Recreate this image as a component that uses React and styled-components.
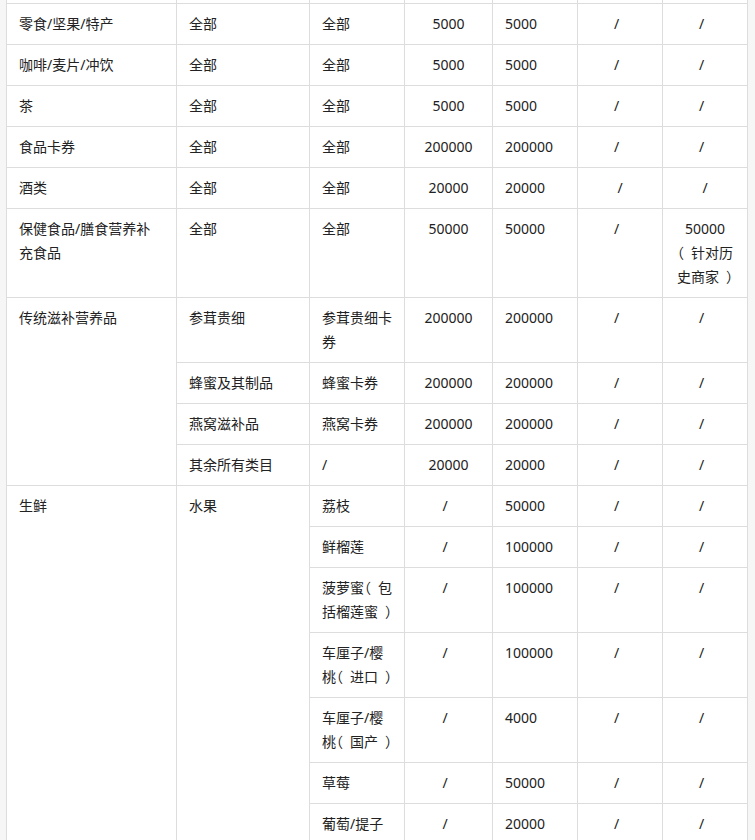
import React from 'react';
import styled, { createGlobalStyle } from 'styled-components';

const GlobalStyle = createGlobalStyle`
  html, body {
    margin: 0;
    padding: 0;
    background: #f6f6f6;
    overflow: hidden;
  }
  body {
    font-family: "Noto Sans", "Noto Sans CJK SC", sans-serif;
  }
`;

const Page = styled.div`
  padding-left: 6px;
  height: 840px;
  overflow: hidden;
`;

const Table = styled.table`
  width: 742px;
  margin-top: -38px;
  border-collapse: collapse;
  table-layout: fixed;
  background: #ffffff;
  color: #222222;
  font-size: 14px;
  line-height: 24px;
`;

const Col = styled.col`
  width: ${props => props.$w}px;
`;

const Cell = styled.td`
  border: 1px solid #dddddd;
  padding: 8px ${props => (props.$lean ? 19 : 12)}px 8px 12px;
  vertical-align: top;
  text-align: ${props => props.$align};
  white-space: nowrap;
`;

// full-width bracket drawn half-width, padded back to a full em on the inner side
const Bracket = styled.span`
  font-feature-settings: "halt" 1;
  margin-left: ${props => (props.$close ? '0.5em' : '0')};
  margin-right: ${props => (props.$close ? '0' : '0.5em')};
`;

const widths = [170, 133, 95, 88, 85, 85, 85];
const aligns = ['left', 'left', 'left', 'center', 'left', 'center', 'center'];

// null = covered by a rowspan above
const rows = [
  { cells: ['\u00a0', '\u00a0', '\u00a0', '\u00a0', '\u00a0', '\u00a0', '\u00a0'] },
  { cells: ['零食/坚果/特产', '全部', '全部', '5000', '5000', '/', '/'] },
  { cells: ['咖啡/麦片/冲饮', '全部', '全部', '5000', '5000', '/', '/'] },
  { cells: ['茶', '全部', '全部', '5000', '5000', '/', '/'] },
  { cells: ['食品卡券', '全部', '全部', '200000', '200000', '/', '/'] },
  { cells: ['酒类', '全部', '全部', '20000', '20000', '/', '/'], straight: true },
  { cells: ['保健食品/膳食营养补\n充食品', '全部', '全部', '50000', '50000', '/', '50000\n（针对历\n史商家）'] },
  { cells: [{ t: '传统滋补营养品', rs: 4 }, '参茸贵细', '参茸贵细卡\n券', '200000', '200000', '/', '/'] },
  { cells: [null, '蜂蜜及其制品', '蜂蜜卡券', '200000', '200000', '/', '/'] },
  { cells: [null, '燕窝滋补品', '燕窝卡券', '200000', '200000', '/', '/'] },
  { cells: [null, '其余所有类目', '/', '20000', '20000', '/', '/'] },
  { cells: [{ t: '生鲜', rs: 7 }, { t: '水果', rs: 7 }, '荔枝', '/', '50000', '/', '/'] },
  { cells: [null, null, '鲜榴莲', '/', '100000', '/', '/'] },
  { cells: [null, null, '菠萝蜜（包\n括榴莲蜜）', '/', '100000', '/', '/'] },
  { cells: [null, null, '车厘子/樱\n桃（进口）', '/', '100000', '/', '/'] },
  { cells: [null, null, '车厘子/樱\n桃（国产）', '/', '4000', '/', '/'] },
  { cells: [null, null, '草莓', '/', '50000', '/', '/'] },
  { cells: [null, null, '葡萄/提子', '/', '20000', '/', '/'] },
];

function Line({ text }) {
  return text.split(/([（）])/).map((bit, i) =>
    bit === '（' || bit === '）' ? (
      <Bracket key={i} $close={bit === '）'}>{bit}</Bracket>
    ) : (
      bit
    )
  );
}

function Lines({ text }) {
  const parts = text.split('\n');
  return parts.map((p, i) => (
    <React.Fragment key={i}>
      <Line text={p} />
      {i < parts.length - 1 && <br />}
    </React.Fragment>
  ));
}

export default function App() {
  return (
    <Page>
      <GlobalStyle />
      <Table>
        <colgroup>
          {widths.map((w, i) => (
            <Col key={i} $w={w} />
          ))}
        </colgroup>
        <tbody>
          {rows.map((row, r) => (
            <tr key={r}>
              {row.cells.map((cell, c) => {
                if (cell === null) return null;
                const text = typeof cell === 'string' ? cell : cell.t;
                const span = typeof cell === 'string' ? 1 : cell.rs;
                const lean = text === '/' && aligns[c] === 'center' && !row.straight;
                return (
                  <Cell key={c} rowSpan={span} $align={aligns[c]} $lean={lean}>
                    <Lines text={text} />
                  </Cell>
                );
              })}
            </tr>
          ))}
        </tbody>
      </Table>
    </Page>
  );
}
